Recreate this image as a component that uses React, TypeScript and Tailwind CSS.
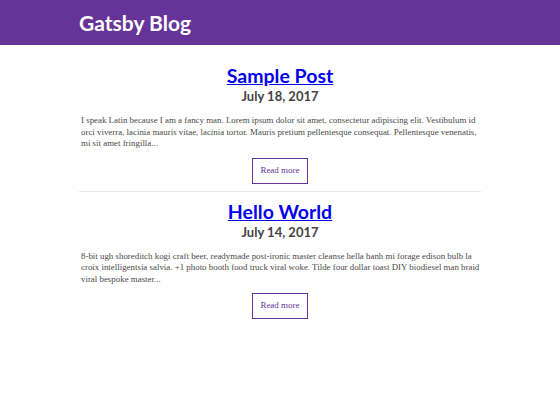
const POSTS = [
  {
    title: "Sample Post",
    date: "July 18, 2017",
    excerpt:
      "I speak Latin because I am a fancy man. Lorem ipsum dolor sit amet, consectetur adipiscing elit. Vestibulum id orci viverra, lacinia mauris vitae, lacinia tortor. Mauris pretium pellentesque consequat. Pellentesque venenatis, mi sit amet fringilla...",
  },
  {
    title: "Hello World",
    date: "July 14, 2017",
    excerpt:
      "8-bit ugh shoreditch kogi craft beer, readymade post-ironic master cleanse hella banh mi forage edison bulb la croix intelligentsia salvia. +1 photo booth food truck viral woke. Tilde four dollar toast DIY biodiesel man braid viral bespoke master...",
  },
];

export default function App() {
  return (
    <div className="min-h-screen bg-white">
      {/* Header */}
      <header className="bg-[#663399] h-[45px] flex items-center">
        <div className="w-[402px] mx-auto">
          <h1 className="text-white text-[21px] font-bold font-['Lato',sans-serif] leading-none">
            Gatsby Blog
          </h1>
        </div>
      </header>

      <main className="w-[402px] mx-auto pt-[20px]">
        {POSTS.map((post, i) => (
          <article
            key={post.title}
            className={
              i < POSTS.length - 1
                ? "border-b border-[#e8e8e8] pb-[7px] mb-[9px]"
                : ""
            }
          >
            <h2 className="text-center font-['Lato',sans-serif] font-bold text-[19.5px] leading-[22px]">
              <a href="#" className="text-[#0000ee] underline">
                {post.title}
              </a>
            </h2>
            <h3 className="text-center font-['Lato',sans-serif] font-bold text-[13px] leading-[18px] text-[#444]">
              {post.date}
            </h3>
            <p className="mt-[10px] pl-[2px] font-['Liberation_Serif',serif] text-[8.9px] leading-[11.5px] text-[#4a4a4a] text-wrap">
              {post.excerpt}
            </p>
            <div className="flex justify-center mt-[8px]">
              <button className="w-[56px] h-[26px] border border-[#663399] text-[#663399] font-['Liberation_Serif',serif] text-[9px]">
                Read more
              </button>
            </div>
          </article>
        ))}
      </main>
    </div>
  );
}
